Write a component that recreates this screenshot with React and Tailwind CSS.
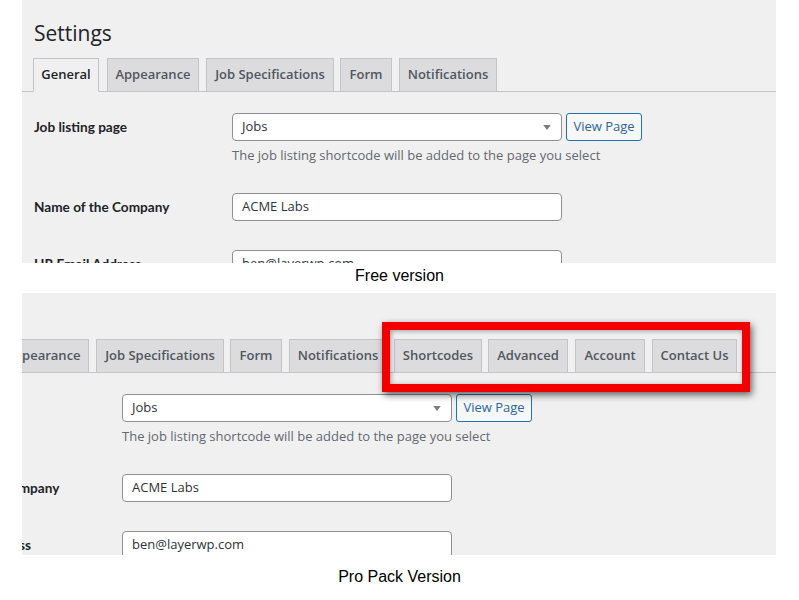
import React from "react";

const baseTabs = [
  { label: "General", cls: "w-[66px] ml-0", active: true },
  { label: "Appearance", cls: "w-[92px] ml-[8px]" },
  { label: "Job Specifications", cls: "w-[128px] ml-[7px]" },
  { label: "Form", cls: "w-[52px] ml-[6px]" },
  { label: "Notifications", cls: "w-[98px] ml-[7px]" },
];

const proTabs = [
  { label: "Shortcodes", cls: "w-[88px] ml-[7px]" },
  { label: "Advanced", cls: "w-[80px] ml-[6px]" },
  { label: "Account", cls: "w-[70px] ml-[7px]" },
  { label: "Contact Us", cls: "w-[85px] ml-[7px]" },
];

function Tab({ label, cls, active }) {
  return (
    <div
      className={
        "h-[34px] -mb-px flex items-center justify-center border border-[#c3c4c7] text-[13px] font-semibold whitespace-nowrap " +
        cls +
        (active
          ? " bg-[#f0f0f1] border-b-[#f0f0f1] text-[#1d2327]"
          : " bg-[#dcdcde] text-[#50575e]")
      }
    >
      {label}
    </div>
  );
}

function Input({ value, select }) {
  return (
    <div className="w-[330px] h-[28px] bg-white border border-[#8c8f94] rounded-[4px] flex items-center px-[9px] text-[13px] font-normal text-[#2c3338]">
      <span className="flex-1">{value}</span>
      {select && (
        <svg width="8" height="5" viewBox="0 0 9 6" className="mr-[1px]">
          <path d="M0 0 L9 0 L4.5 6 Z" fill="#7a7d80" />
        </svg>
      )}
    </div>
  );
}

function Label({ children }) {
  return (
    <div
      className="w-[198px] h-[28px] flex items-center text-[13.6px] font-bold text-[#1d2327]"
      style={{ fontFamily: 'Lato, "Open Sans", sans-serif' }}
    >
      {children}
    </div>
  );
}

function Content({ pro }) {
  const tabs = pro ? [...baseTabs, ...proTabs] : baseTabs;
  return (
    <div className={pro ? "w-[864px] -ml-[110px] -mt-[12px]" : "w-full"}>
      <div className="pl-[12px] pt-[19px] h-[58px] text-[21px] text-[#1d2327] leading-[28px]">
        Settings
      </div>
      <div className="flex pl-[11px] border-b border-[#c3c4c7] h-[34px]">
        {tabs.map((t) => (
          <Tab key={t.label} {...t} />
        ))}
      </div>
      <div className="pl-[12px]">
        <div className="flex pt-[21px]">
          <Label>Job listing page</Label>
          <div>
            <div className="flex gap-[4px]">
              <Input value="Jobs" select />
              <div className="w-[76px] h-[28px] border border-[#2271b1] bg-[#f6f7f7] rounded-[3px] flex items-center justify-center text-[13px] text-[#2f659a]">
                View Page
              </div>
            </div>
            <div className="mt-[4px] text-[13px] text-[#646970] leading-[20px]">
              The job listing shortcode will be added to the page you select
            </div>
          </div>
        </div>
        <div className="flex pt-[28px]">
          <Label>Name of the Company</Label>
          <Input value="ACME Labs" />
        </div>
        <div className="flex pt-[29px]">
          <Label>HR Email Address</Label>
          <Input value="ben@layerwp.com" />
        </div>
      </div>
    </div>
  );
}

export default function App() {
  return (
    <div
      className="w-[799px] h-[600px] bg-white"
      style={{ fontFamily: '"Open Sans", sans-serif' }}
    >
      <div className="ml-[22px] w-[754px] h-[263px] bg-[#f0f0f1] overflow-hidden">
        <Content />
      </div>
      <div
        className="h-[30px] pb-[4px] flex items-center justify-center text-[16px] text-black"
        style={{ fontFamily: '"Liberation Sans", Arial, sans-serif' }}
      >
        Free version
      </div>
      <div className="relative ml-[22px] w-[754px] h-[262px] bg-[#f0f0f1] overflow-hidden">
        <Content pro />
        <div className="absolute left-[360px] top-[29px] w-[368px] h-[70px] border-[8px] border-[#f20000] shadow-[2px_3px_7px_rgba(0,0,0,0.6),inset_1px_1px_5px_rgba(0,0,0,0.35)]" />
      </div>
      <div
        className="h-[44px] flex items-center justify-center text-[16px] text-black"
        style={{ fontFamily: '"Liberation Sans", Arial, sans-serif' }}
      >
        Pro Pack Version
      </div>
    </div>
  );
}
